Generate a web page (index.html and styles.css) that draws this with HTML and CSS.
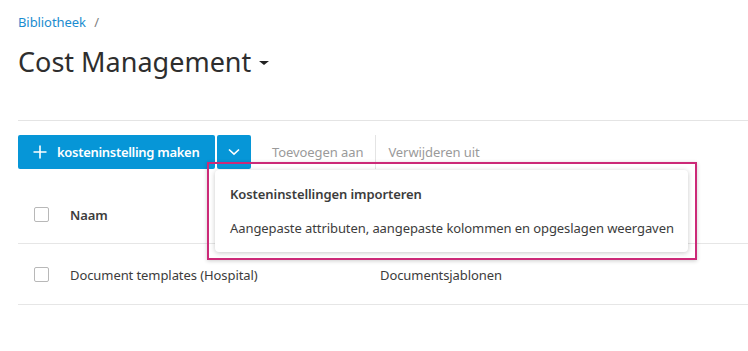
FILE: index.html
```html
<!DOCTYPE html>
<html lang="nl">
<head>
  <meta charset="UTF-8">
  <meta name="viewport" content="width=device-width, initial-scale=1.0" />
  <title>Cost Management</title>
  <link rel="stylesheet" href="styles.css">
</head>
<body>
  <div class="page">
    <div class="page-header">
      <div class="breadcrumb">
        <a href="#">Bibliotheek</a>
        <span class="sep">/</span>
      </div>
      <h1 class="title">Cost Management<span class="caret"></span></h1>
    </div>

    <div class="toolbar">
      <button class="btn-create">
        <svg width="14" height="14" viewBox="0 0 14 14">
          <path d="M7 0.5V13.5M0.5 7H13.5" stroke="#fff" stroke-width="1.6" fill="none" />
        </svg>
        kosteninstelling maken
      </button>
      <button class="btn-split">
        <svg width="12" height="8" viewBox="0 0 12 8">
          <path d="M1 1.5L6 6.2L11 1.5" stroke="#fff" stroke-width="1.6" fill="none" />
        </svg>
      </button>
      <span class="tool-link">Toevoegen aan</span>
      <span class="tool-divider"></span>
      <span class="tool-link">Verwijderen uit</span>

      <div class="menu">
        <div class="menu-item menu-head">Kosteninstellingen importeren</div>
        <div class="menu-item">Aangepaste attributen, aangepaste kolommen en opgeslagen weergaven</div>
      </div>
      <div class="highlight"></div>
    </div>

    <div class="table">
      <div class="row row-head">
        <span class="check"></span>
        <span class="cell cell-name">Naam</span>
        <span class="cell"></span>
      </div>
      <div class="row">
        <span class="check"></span>
        <span class="cell cell-name">Document templates (Hospital)</span>
        <span class="cell">Documentsjablonen</span>
      </div>
    </div>
  </div>
</body>
</html>
```

FILE: styles.css
```css
body {
  margin: 0;
  font-family: "Noto Sans", sans-serif;
  color: #3c3c3c;
  background: #fff;
  letter-spacing: -0.08px;
}

.page {
  padding-left: 18px;
}

.page-header {
  border-bottom: 1px solid #e4e4e4;
  height: 120px;
}

.breadcrumb {
  padding-top: 13px;
  font-size: 13px;
  line-height: 18px;
}

.breadcrumb a {
  color: #1b8ccf;
  text-decoration: none;
}

.breadcrumb .sep {
  color: #808080;
  margin-left: 5px;
}

.title {
  margin: 13px 0 0;
  font-size: 27px;
  font-weight: 400;
  line-height: 36px;
  color: #2e2e2e;
  letter-spacing: 0;
}

.caret {
  display: inline-block;
  vertical-align: middle;
  margin-left: 8px;
  margin-top: -3px;
  border-left: 5px solid transparent;
  border-right: 5px solid transparent;
  border-top: 4px solid #222;
}

.toolbar {
  position: relative;
  display: flex;
  align-items: center;
  margin-top: 14px;
  height: 34px;
}

.btn-create,
.btn-split {
  height: 34px;
  border: none;
  border-radius: 2px;
  background: #0696d7;
  color: #fff;
  font-family: inherit;
  font-size: 13px;
  font-weight: 600;
  display: flex;
  align-items: center;
  cursor: pointer;
}

.btn-create {
  width: 197px;
  padding: 0 0 0 15px;
  gap: 10px;
  letter-spacing: -0.3px;
}

.btn-split {
  width: 34px;
  margin-left: 2px;
  justify-content: center;
  padding: 0;
}

.tool-link {
  font-size: 13px;
  color: #9a9a9a;
  padding: 0 12px;
}

.btn-split + .tool-link {
  margin-left: 9px;
}

.tool-divider {
  width: 1px;
  height: 34px;
  background: #e4e4e4;
}

.menu {
  position: absolute;
  left: 197px;
  top: 35px;
  width: 473px;
  height: 82px;
  background: #fff;
  border-radius: 4px;
  box-shadow: 0 1px 5px rgba(0, 0, 0, 0.22);
  padding-top: 7px;
  box-sizing: border-box;
  z-index: 2;
}

.menu-item {
  font-size: 13px;
  line-height: 34px;
  padding: 0 15px;
  color: #3c3c3c;
  white-space: nowrap;
}

.menu-head {
  font-weight: 600;
}

.highlight {
  position: absolute;
  left: 189px;
  top: 27px;
  width: 486px;
  height: 94px;
  border: 2px solid #cc2a78;
  box-shadow: 0 1px 4px rgba(0, 0, 0, 0.2);
  z-index: 3;
}

.table {
  margin-top: 17px;
}

.row {
  display: flex;
  align-items: center;
  height: 60px;
  border-bottom: 1px solid #e6e6e6;
  font-size: 13px;
}

.row-head {
  height: 57px;
  font-weight: 600;
}

.row + .row .cell {
  padding-top: 2px;
}

.check {
  width: 13px;
  height: 13px;
  border: 1px solid #b8b8b8;
  border-radius: 2px;
  margin-left: 16px;
  margin-right: 21px;
}

.cell-name {
  width: 310px;
}
```
